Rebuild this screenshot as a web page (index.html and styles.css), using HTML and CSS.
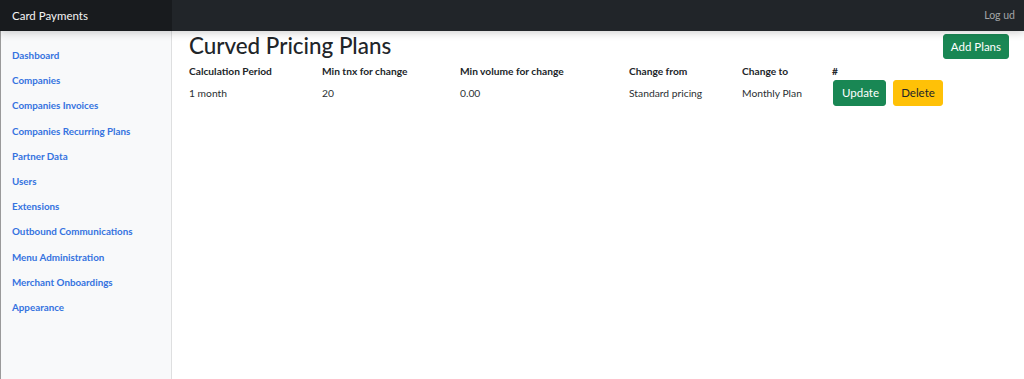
FILE: index.html
```html
<!DOCTYPE html>
<html lang="da">
<head>
<meta charset="utf-8">
<title>Curved Pricing Plans</title>
<link rel="stylesheet" href="styles.css">
</head>
<body>
<header class="topbar">
  <a class="brand" href="#">Card Payments</a>
  <a class="logout" href="#">Log ud</a>
</header>
<div class="layout">
  <nav class="sidebar">
    <a class="nav-link" href="#">Dashboard</a>
    <a class="nav-link" href="#">Companies</a>
    <a class="nav-link" href="#">Companies Invoices</a>
    <a class="nav-link" href="#">Companies Recurring Plans</a>
    <a class="nav-link" href="#">Partner Data</a>
    <a class="nav-link" href="#">Users</a>
    <a class="nav-link" href="#">Extensions</a>
    <a class="nav-link" href="#">Outbound Communications</a>
    <a class="nav-link" href="#">Menu Administration</a>
    <a class="nav-link" href="#">Merchant Onboardings</a>
    <a class="nav-link" href="#">Appearance</a>
  </nav>
  <main class="main">
    <div class="title-row">
      <h2 class="title">Curved Pricing Plans</h2>
      <button class="btn btn-success btn-add">Add Plans</button>
    </div>
    <table class="plans">
      <colgroup>
        <col class="c1"><col class="c2"><col class="c3"><col class="c4"><col class="c5"><col>
      </colgroup>
      <thead>
        <tr>
          <th>Calculation Period</th>
          <th>Min tnx for change</th>
          <th>Min volume for change</th>
          <th>Change from</th>
          <th>Change to</th>
          <th>#</th>
        </tr>
      </thead>
      <tbody>
        <tr>
          <td>1 month</td>
          <td>20</td>
          <td>0.00</td>
          <td>Standard pricing</td>
          <td>Monthly Plan</td>
          <td class="actions">
            <button class="btn btn-success">Update</button>
            <button class="btn btn-warning">Delete</button>
          </td>
        </tr>
      </tbody>
    </table>
  </main>
</div>
</body>
</html>
```

FILE: styles.css
```css
* { box-sizing: border-box; }

html, body {
  margin: 0;
  padding: 0;
  height: 100%;
}

body {
  font-family: "Lato", "Open Sans", sans-serif;
  color: #212529;
  background: #fff;
  font-size: 10.5px;
  display: flex;
  flex-direction: column;
  overflow: hidden;
}

.topbar {
  flex: 0 0 31px;
  height: 31px;
  background: #212529;
  display: flex;
  align-items: center;
  justify-content: space-between;
  box-shadow: 0 2px 8px rgba(0, 0, 0, 0.18);
  position: relative;
  z-index: 2;
}

.brand {
  width: 172px;
  height: 100%;
  display: flex;
  align-items: center;
  padding-left: 12px;
  background: rgba(0, 0, 0, 0.25);
  color: #f4f4f4;
  text-decoration: none;
  font-size: 11.5px;
}

.logout {
  color: #a3a5a8;
  text-decoration: none;
  font-size: 10.5px;
  padding-right: 9px;
  padding-bottom: 1px;
}

.layout {
  flex: 1;
  display: flex;
  min-height: 0;
}

.sidebar {
  width: 172px;
  flex: 0 0 172px;
  background: #f8f9fa;
  border-left: 1px solid #9a9a9a;
  box-shadow: inset -1px 0 0 rgba(0, 0, 0, 0.1);
  display: flex;
  flex-direction: column;
  padding-top: 12px;
}

.nav-link {
  display: block;
  height: 25.2px;
  line-height: 25.2px;
  padding-left: 11px;
  color: #3573e0;
  text-decoration: none;
  font-weight: 700;
  font-size: 9.8px;
}

.main {
  flex: 1;
  padding: 0 15px 0 17px;
}

.title-row {
  display: flex;
  justify-content: space-between;
  align-items: center;
  height: 29px;
  margin-bottom: 2px;
}

.title {
  margin: 0;
  font-size: 22.4px;
  font-weight: 500;
  line-height: 1;
  color: #212529;
  padding-top: 1px;
}

.btn {
  font-family: inherit;
  font-size: 11.5px;
  border: 1px solid transparent;
  border-radius: 3px;
  padding: 0 8px;
  height: 26px;
  cursor: pointer;
}

.btn-success {
  background: #198754;
  border-color: #198754;
  color: #fff;
}

.btn-warning {
  background: #ffc107;
  border-color: #ffc107;
  color: #212529;
}

.btn-add {
  height: 25px;
  margin-top: 1px;
  padding: 0 7px;
}

.plans {
  border-collapse: collapse;
  table-layout: fixed;
  width: 100%;
}

.c1 { width: 133px; }
.c2 { width: 138px; }
.c3 { width: 169px; }
.c4 { width: 113px; }
.c5 { width: 90px; }

.plans th,
.plans td {
  padding: 0;
  text-align: left;
  vertical-align: middle;
  white-space: nowrap;
}

.plans th {
  font-weight: 700;
  height: 17px;
  font-size: 10.2px;
}

.plans td {
  height: 27px;
  font-size: 10.3px;
  font-weight: 400;
  color: #2b2f33;
}

.actions {
  display: flex;
  gap: 7px;
  align-items: center;
  height: 27px;
  padding-left: 1px !important;
}

.actions .btn {
  height: 26px;
}

.actions .btn-success { padding: 0 8px; width: 53px; }
.actions .btn-warning { padding: 0 6px; width: 50px; }
```
